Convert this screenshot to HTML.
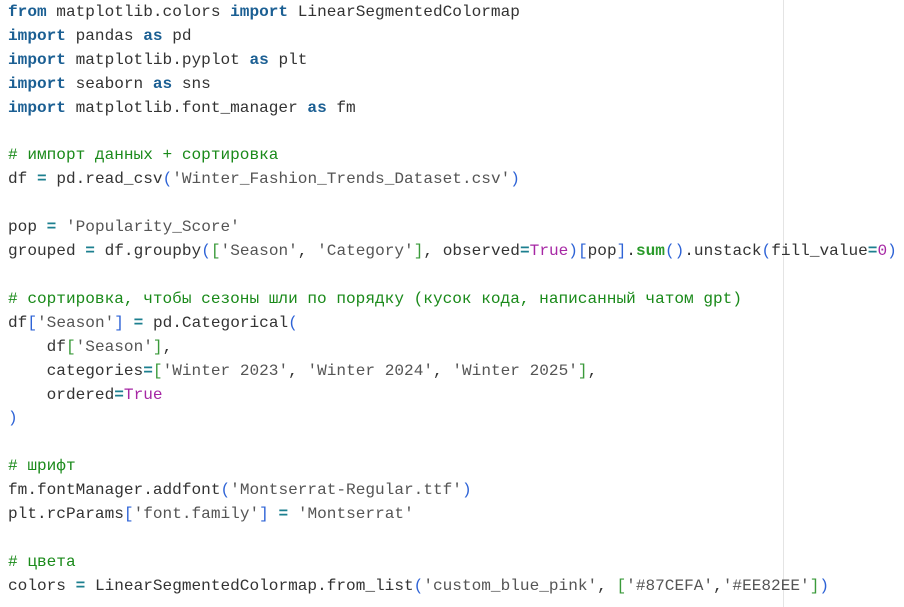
<!DOCTYPE html><html><head><meta charset="utf-8"><style>
body{margin:0;width:904px;height:607px;background:#fff;overflow:hidden;position:relative}
pre{margin:0;position:absolute;left:8px;top:1px;font-family:"Liberation Mono","DejaVu Sans Mono",monospace;font-size:16.1px;line-height:23.9px;color:#333}
.k{color:#1b5f93;font-weight:bold}.o{color:#1c7f8f;font-weight:bold}.c{color:#1a8a1a}.s{color:#555}.b{color:#2e63d6}.g{color:#3a9a3a}.t{color:#a626a4}.f{color:#2a9a2a;font-weight:bold}
.vl{position:absolute;left:783px;top:0;width:1px;height:607px;background:#e4e4e4}
</style></head><body><div class="vl"></div><pre><span class="k">from</span> matplotlib.colors <span class="k">import</span> LinearSegmentedColormap
<span class="k">import</span> pandas <span class="k">as</span> pd
<span class="k">import</span> matplotlib.pyplot <span class="k">as</span> plt
<span class="k">import</span> seaborn <span class="k">as</span> sns
<span class="k">import</span> matplotlib.font_manager <span class="k">as</span> fm

<span class="c"># импорт данных + сортировка</span>
df <span class="o">=</span> pd.read_csv<span class="b">(</span><span class="s">'Winter_Fashion_Trends_Dataset.csv'</span><span class="b">)</span>

pop <span class="o">=</span> <span class="s">'Popularity_Score'</span>
grouped <span class="o">=</span> df.groupby<span class="b">(</span><span class="g">[</span><span class="s">'Season'</span>, <span class="s">'Category'</span><span class="g">]</span>, observed<span class="o">=</span><span class="t">True</span><span class="b">)[</span>pop<span class="b">]</span>.<span class="f">sum</span><span class="b">()</span>.unstack<span class="b">(</span>fill_value<span class="o">=</span><span class="t">0</span><span class="b">)</span>

<span class="c"># сортировка, чтобы сезоны шли по порядку (кусок кода, написанный чатом gpt)</span>
df<span class="b">[</span><span class="s">'Season'</span><span class="b">]</span> <span class="o">=</span> pd.Categorical<span class="b">(</span>
    df<span class="g">[</span><span class="s">'Season'</span><span class="g">]</span>,
    categories<span class="o">=</span><span class="g">[</span><span class="s">'Winter 2023'</span>, <span class="s">'Winter 2024'</span>, <span class="s">'Winter 2025'</span><span class="g">]</span>,
    ordered<span class="o">=</span><span class="t">True</span>
<span class="b">)</span>

<span class="c"># шрифт</span>
fm.fontManager.addfont<span class="b">(</span><span class="s">'Montserrat-Regular.ttf'</span><span class="b">)</span>
plt.rcParams<span class="b">[</span><span class="s">'font.family'</span><span class="b">]</span> <span class="o">=</span> <span class="s">'Montserrat'</span>

<span class="c"># цвета</span>
colors <span class="o">=</span> LinearSegmentedColormap.from_list<span class="b">(</span><span class="s">'custom_blue_pink'</span>, <span class="g">[</span><span class="s">'#87CEFA'</span>,<span class="s">'#EE82EE'</span><span class="g">]</span><span class="b">)</span></pre></body></html>
